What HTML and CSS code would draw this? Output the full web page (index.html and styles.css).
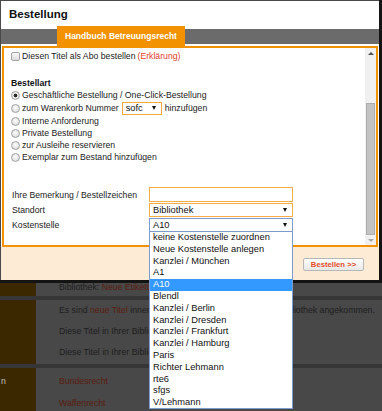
FILE: index.html
```html
<!DOCTYPE html>
<html lang="de">
<head>
<meta charset="utf-8">
<title>Bestellung</title>
<link rel="stylesheet" href="styles.css">
</head>
<body>
<div class="page">
  <div class="sec sec-a">
    <div class="side"></div>
    <div class="main">
      <p class="line">Bibliothek: <span class="lnk">Neue Etiketten</span></p>
    </div>
  </div>
  <div class="sec sec-b">
    <div class="side"></div>
    <div class="main">
      <p class="line">Es sind <span class="lnk">neue Titel</span> innerhalb der letzten drei Tage in Ihrer Bibliothek angekommen.</p>
      <p class="line">Diese Titel in Ihrer Bibliothek anzeigen</p>
      <p class="line">Diese Titel in Ihrer Bibliothek bestellen</p>
    </div>
  </div>
  <div class="sec sec-c">
    <div class="side"><span class="side-txt">n</span></div>
    <div class="main">
      <p class="line lnk">Bundesrecht</p>
      <p class="line lnk">Waffenrecht</p>
    </div>
  </div>
</div>

<div class="dialog">
  <div class="dlg-head"><h1 class="dlg-title">Bestellung</h1></div>
  <div class="tabbar"><span class="tab">Handbuch Betreuungsrecht</span></div>
  <div class="panel">
    <div class="form">
      <div class="opt"><span class="chk"></span>Diesen Titel als Abo bestellen <span class="red">(Erklärung)</span></div>
      <div class="group-title">Bestellart</div>
      <div class="opt"><span class="rad on"></span>Geschäftliche Bestellung / One-Click-Bestellung</div>
      <div class="opt opt-tall"><span class="rad"></span>zum Warenkorb Nummer <span class="sel-sm">sofc<i class="arr"></i></span> hinzufügen</div>
      <div class="opt"><span class="rad"></span>Interne Anforderung</div>
      <div class="opt"><span class="rad"></span>Private Bestellung</div>
      <div class="opt"><span class="rad"></span>zur Ausleihe reservieren</div>
      <div class="opt"><span class="rad"></span>Exemplar zum Bestand hinzufügen</div>
      <div class="fields">
        <span class="flabel">Ihre Bemerkung / Bestellzeichen</span>
        <span class="input"></span>
        <span class="flabel">Standort</span>
        <span class="select">Bibliothek<i class="arr"></i></span>
        <span class="flabel">Kostenstelle</span>
        <span class="select focus">A10<i class="arr"></i></span>
      </div>
    </div>
    <div class="scrollbar">
      <div class="sb-btn"><i class="tri-up"></i></div>
      <div class="sb-track"><div class="sb-thumb"></div></div>
      <div class="sb-btn sb-btn-down"><i class="tri-down"></i></div>
    </div>
  </div>
  <div class="dlg-foot"><button class="btn-order" type="button">Bestellen &gt;&gt;</button></div>
</div>

<ul class="dropdown">
  <li>keine Kostenstelle zuordnen</li>
  <li>Neue Kostenstelle anlegen</li>
  <li>Kanzlei / München</li>
  <li>A1</li>
  <li class="sel">A10</li>
  <li>Blendl</li>
  <li>Kanzlei / Berlin</li>
  <li>Kanzlei / Dresden</li>
  <li>Kanzlei / Frankfurt</li>
  <li>Kanzlei / Hamburg</li>
  <li>Paris</li>
  <li>Richter Lehmann</li>
  <li>rte6</li>
  <li>sfgs</li>
  <li>V/Lehmann</li>
</ul>
</body>
</html>
```

FILE: styles.css
```css
* { box-sizing: border-box; }
html, body { margin: 0; padding: 0; }
body {
  position: relative;
  width: 382px;
  height: 411px;
  overflow: hidden;
  background: #363636;
  font-family: "Liberation Sans", Arial, sans-serif;
  color: #1e1e1e;
}
p { margin: 0; }

/* dimmed page behind the dialog */
.page { display: flex; flex-direction: column; gap: 4px; }
.sec { display: flex; }
.side { flex: none; width: 36px; background: #3b2800; color: #c4c4c4; font-size: 8.7px; }
.main {
  flex: 1;
  background: #484848;
  padding-left: 23px;
  display: flex;
  flex-direction: column;
  font-size: 8.73px;
  white-space: nowrap;
  overflow: hidden;
}
.lnk { color: #5a1d10; }
.sec-a { height: 296px; }
.sec-a .main { justify-content: flex-end; padding-bottom: 2px; }
.sec-a .line { line-height: 14px; }
.sec-b { height: 64px; }
.sec-b .line { line-height: 21px; }
.sec-c { height: 60px; }
.sec-c .main { padding-top: 2px; }
.sec-c .line { line-height: 22px; }
.sec-c .side { padding-top: 2px; line-height: 22px; }
.side-txt { display: block; margin-left: 1px; }

/* dialog */
.dialog {
  position: absolute;
  left: 0;
  top: 0;
  width: 379px;
  height: 280px;
  background: #fff;
  border-left: 1px solid #4a4a4a;
  border-top: 1px solid #4a4a4a;
  box-shadow: 0 0 0 3px #141414;
  display: flex;
  flex-direction: column;
}
.dlg-head { flex: none; height: 28px; padding-left: 8px; }
.dlg-title { margin: 0; font-size: 11.5px; font-weight: bold; line-height: 26px; color: #111; }
.tabbar { flex: none; height: 15px; background: #6b6b6b; padding-left: 56px; display: flex; }
.tab {
  margin-top: -3px;
  height: 21px;
  padding: 0 8px;
  background: #f39200;
  color: #fff;
  font-weight: bold;
  font-size: 8.5px;
  line-height: 20px;
  white-space: nowrap;
}
.panel {
  flex: none;
  height: 201px;
  margin: 2px 1px 0;
  border: 2px solid #f39200;
  display: flex;
}
.form { flex: 1; padding: 2px 0 0 7px; font-size: 8.7px; color: #222; }
.opt { display: flex; align-items: center; gap: 2px; height: 12px; white-space: nowrap; }
.opt-tall { height: 14px; }
.red { color: #e2402c; }
.group-title { margin-top: 15px; font-weight: bold; line-height: 12px; color: #111; }
.chk {
  flex: none;
  width: 9px;
  height: 9px;
  border: 1px solid #a3a3a3;
  border-radius: 2px;
  background: linear-gradient(#f8f8f8, #dcdcdc);
}
.rad {
  flex: none;
  width: 9px;
  height: 9px;
  border: 1px solid #a0a0a0;
  border-radius: 50%;
  background: radial-gradient(circle at 50% 40%, #fdfdfd, #d4d4d4);
}
.rad.on { background: radial-gradient(circle, #2a2a2a 0 1.6px, #f0f0f0 2.2px, #d4d4d4); }
.sel-sm {
  display: inline-flex;
  align-items: center;
  justify-content: space-between;
  width: 40px;
  height: 13px;
  margin: 0 1px;
  padding: 0 5px 0 3px;
  border: 1px solid #f5a83c;
  font-size: 9.3px;
  color: #111;
}
.arr {
  width: 0;
  height: 0;
  border-left: 2.5px solid transparent;
  border-right: 2.5px solid transparent;
  border-top: 4px solid #111;
}
.fields {
  margin-top: 24px;
  display: grid;
  grid-template-columns: 138px 144px;
  row-gap: 1px;
  align-items: center;
}
.flabel { padding-left: 1px; white-space: nowrap; }
.input { height: 15px; border: 1px solid #f7ad45; }
.select {
  height: 14px;
  border: 1px solid #f7ad45;
  display: flex;
  align-items: center;
  justify-content: space-between;
  padding: 0 5px 0 3px;
  font-size: 9.3px;
  color: #111;
}
.select.focus { border-color: #7d9bcf; }

.scrollbar { flex: none; width: 11px; background: #f0f0f0; display: flex; flex-direction: column; }
.sb-btn { flex: none; height: 11px; display: flex; align-items: center; justify-content: center; }
.sb-btn-down { height: 10px; }
.tri-up { width: 0; height: 0; border-left: 3px solid transparent; border-right: 3px solid transparent; border-bottom: 3px solid #4e4e4e; }
.tri-down { width: 0; height: 0; border-left: 3px solid transparent; border-right: 3px solid transparent; border-top: 3px solid #a6a6a6; }
.sb-track { flex: 1; padding-top: 44px; display: flex; flex-direction: column; }
.sb-thumb { flex: 1; margin: 0 1px; background: #c2c2c2; border: 1px solid #adadad; }

.dlg-foot {
  flex: 1;
  background: #fdebd5;
  display: flex;
  justify-content: flex-end;
  align-items: center;
  padding: 1px 15px 0 0;
}
.btn-order {
  width: 61px;
  height: 13px;
  padding: 0;
  border: 1px solid #b7b7b7;
  border-radius: 2px;
  background: linear-gradient(#fefefe, #e8e8e8);
  color: #e4502b;
  font: bold 7.7px "Liberation Sans", Arial, sans-serif;
  line-height: 11px;
}

/* open select list */
.dropdown {
  position: absolute;
  left: 149px;
  top: 231px;
  width: 144px;
  height: 178px;
  margin: 0;
  padding: 0;
  list-style: none;
  background: #fff;
  border: 1px solid #7d9bcf;
  font-size: 9.3px;
  color: #111;
}
.dropdown li { height: 11.8px; line-height: 11.8px; padding-left: 3px; white-space: nowrap; }
.dropdown li.sel { background: #3399ff; color: #fff; }
```
